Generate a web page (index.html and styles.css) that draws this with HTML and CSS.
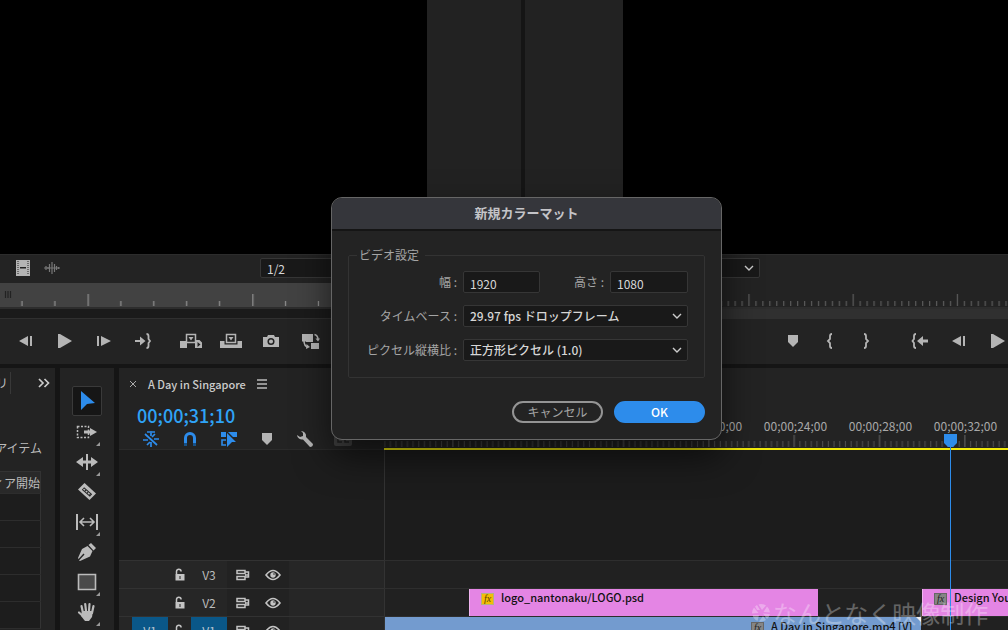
FILE: index.html
```html
<!DOCTYPE html>
<html lang="ja">
<head>
<meta charset="utf-8">
<title>新規カラーマット</title>
<link rel="stylesheet" href="styles.css">
</head>
<body>
<svg class="defs" aria-hidden="true">
  <symbol id="step-back" viewBox="0 0 16 14"><path d="M1 7 10 2v10zM12 2h2v10h-2z"/></symbol>
  <symbol id="play" viewBox="0 0 16 14"><path d="M1 0h2l12 7-12 7H1z"/></symbol>
  <symbol id="step-fwd" viewBox="0 0 16 14"><path d="M1 2h2v10H1zM5 2l10 5-10 5z"/></symbol>
  <symbol id="marker" viewBox="0 0 12 14"><path d="M1 1h10v7l-5 5-5-5z"/></symbol>
  <symbol id="lock" viewBox="0 0 12 14"><path d="M2.500 6V3.500a2.300 2.300 0 0 1 4.600 0" fill="none" stroke="currentColor" stroke-width="1.500"/><path d="M1.500 6h9v6.500h-9z"/><path d="M5.500 8h1v3h-1z" fill="#222"/></symbol>
  <symbol id="sync" viewBox="0 0 14 12"><path d="M1 1.500h8v3H1zM1 7.500h8v3H1zM9 3h3.500v5H9M9 6h3" fill="none" stroke="currentColor" stroke-width="1.500"/></symbol>
  <symbol id="eye" viewBox="0 0 16 12"><path d="M1 6q7-9 14 0-7 9-14 0z" fill="none" stroke="currentColor" stroke-width="1.600"/><circle cx="8" cy="6" r="2.700"/><circle cx="9" cy="5" r=".8" fill="#222"/></symbol>
  <symbol id="chev" viewBox="0 0 10 6"><path d="M1 1l4 4 4-4" fill="none" stroke="currentColor" stroke-width="1.400"/></symbol>
</svg>

<main class="workspace">
  <div class="monitors">
    <section class="monitor source">
      <div class="preview"><div class="pasteboard"></div></div>
      <div class="options">
        <button class="icon" aria-label="ビデオのみ"><svg width="16" height="16" viewBox="0 0 16 16"><path d="M1 0h14v16H1z"/><path d="M3 1v14M13 1v14" stroke="#222" stroke-width="1" stroke-dasharray="1 1"/><path d="M5 7h6v1.500H5z" fill="#222"/></svg></button>
        <button class="icon wave" aria-label="オーディオのみ"><svg width="18" height="14" viewBox="0 0 18 14"><path d="M1 7h16M3 5v4M5 6v2M6.500 3v8M9 1v12M11.500 3v8M13.500 5v4M15.500 6v2" fill="none" stroke="currentColor" stroke-width="1.200"/></svg></button>
        <select class="box scale" aria-label="再生時の解像度"><option>1/2</option></select>
      </div>
      <svg class="ruler bright" aria-hidden="true">
        <pattern id="t1" x="87.500" width="164.700" height="24" patternUnits="userSpaceOnUse"><path d="M.7 11v12M33.400 18v5M66.300 18v5M99.200 18v5M132.100 18v5" stroke="#929292" stroke-width="1.200"/></pattern>
        <path d="M5.500 8v7M8 8v7M10.500 8v7" stroke="#222" stroke-width="1.200"/>
        <rect width="100%" height="24" fill="url(#t1)"/>
      </svg>
      <div class="scroll"></div>
      <div class="transport">
        <button class="icon"><svg width="16" height="14"><use href="#step-back"/></svg></button>
        <button class="icon"><svg width="16" height="14"><use href="#play"/></svg></button>
        <button class="icon"><svg width="16" height="14"><use href="#step-fwd"/></svg></button>
        <button class="icon"><svg width="18" height="16" viewBox="0 0 18 16"><path d="M1 7h5V3.500L11.500 8 6 12.500V9H1z"/><path d="M12.500 1q2 0 2 2v3l1.500 2-1.500 2v3q0 2-2 2" fill="none" stroke="currentColor" stroke-width="1.800"/></svg></button>
        <div class="group">
          <button class="icon"><svg width="22" height="16" viewBox="0 0 22 16"><path d="M0 8h7v7H0zM15 7h4.500L22 9.500V15h-7z"/><path d="M6.500 1.500h9v8h-9z" fill="#222" stroke="currentColor" stroke-width="1.500"/><path d="M8.500 4h5L11 7.500z"/><path d="M17.500 9l3 2.500-3 2.500z" fill="#222"/></svg></button>
          <button class="icon"><svg width="22" height="16" viewBox="0 0 22 16"><path d="M0 8h22v7H0z"/><path d="M4.500 7h13v5h-13z" fill="#222"/><path d="M6.500 1.500h9v8h-9z" fill="#222" stroke="currentColor" stroke-width="1.500"/><path d="M8.500 4h5L11 7.500zM4 11.500h14V15H4z"/></svg></button>
          <button class="icon"><svg width="18" height="14" viewBox="0 0 18 14"><path d="M1 3h4l1-2h6l1 2h4v10H1z"/><circle cx="9" cy="7.500" r="2.800" fill="none" stroke="#222" stroke-width="1.500"/></svg></button>
          <button class="icon"><svg width="20" height="18" viewBox="0 0 20 18"><path d="M1 2h11v8H1zM10 11h8v6h-8z"/><path d="M3 9.500q0 5 4 6" fill="none" stroke="#222" stroke-width="4"/><path d="M3 8.500q0 6 4 6.500M13.500 2.500q3.500 1 3.500 5" fill="none" stroke="currentColor" stroke-width="1.500"/><path d="M5.500 12l3.500 3-4 2zM14.500 6.500H19l-2 3z"/></svg></button>
        </div>
      </div>
    </section>
    <section class="monitor program">
      <div class="preview"><div class="pasteboard"></div></div>
      <div class="options"><select class="box fit" aria-label="ズームレベル"><option></option></select><svg class="arrow" width="10" height="6"><use href="#chev"/></svg></div>
      <svg class="ruler" aria-hidden="true">
        <pattern id="t2" x="15" width="104.200" height="24" patternUnits="userSpaceOnUse"><path d="M.6 11v12" stroke="#666"/><path d="M7.550 18v5m6.950-5v5m6.950-5v5m6.950-5v5m6.950-5v5m6.950-5v5m6.950-5v5m6.950-5v5m6.950-5v5m6.950-5v5m6.950-5v5m6.950-5v5m6.950-5v5m6.950-5v5" stroke="#5a5a5a" stroke-width="1.200" fill="none"/></pattern>
        <rect width="100%" height="24" fill="url(#t2)"/>
      </svg>
      <div class="scroll"></div>
      <div class="transport">
        <button class="icon"><svg width="12" height="14"><use href="#marker"/></svg></button>
        <button class="icon brace"><svg width="8" height="16" viewBox="0 0 8 16"><path d="M6 1Q4 1 4 3v3L2 8l2 2v3q0 2 2 2" fill="none" stroke="currentColor" stroke-width="1.800"/></svg></button>
        <button class="icon brace"><svg width="8" height="16" viewBox="0 0 8 16"><path d="M2 1q2 0 2 2v3l2 2-2 2v3q0 2-2 2" fill="none" stroke="currentColor" stroke-width="1.800"/></svg></button>
        <div class="group">
          <button class="icon"><svg width="18" height="16" viewBox="0 0 18 16"><path d="M17 6.500h-5V3L6 8l6 5V9.500h5z"/><path d="M5 1Q3 1 3 3v3L1.500 8 3 10v3q0 2 2 2" fill="none" stroke="currentColor" stroke-width="1.800"/></svg></button>
          <button class="icon"><svg width="16" height="14"><use href="#step-back"/></svg></button>
          <button class="icon"><svg width="16" height="14"><use href="#play"/></svg></button>
        </div>
      </div>
    </section>
  </div>

  <div class="lower">
    <section class="project">
      <div class="tabs"><span class="tab-cut">リ</span><svg width="12" height="10" viewBox="0 0 12 10"><path d="M1 1l4 4-4 4M6.500 1l4 4-4 4" fill="none" stroke="#ccc" stroke-width="1.700"/></svg></div>
      <p class="count">アイテム</p>
      <table class="bin">
        <tr><th><span class="cut">ィア開始</span></th></tr>
        <tr><td></td></tr><tr><td></td></tr><tr><td></td></tr><tr><td></td></tr><tr><td></td></tr>
      </table>
    </section>

    <nav class="tools" aria-label="ツール">
      <button class="tool active"><svg width="18" height="20" viewBox="0 0 18 20"><path d="M3 0l14 12-8 1-6 6z"/></svg></button>
      <button class="tool more"><svg width="22" height="14" viewBox="0 0 22 14"><path d="M1.500 1.500h11v11h-11z" fill="none" stroke="currentColor" stroke-width="1.500" stroke-dasharray="2 1.500"/><path d="M8 5.500h6V3l7 4-7 4V8.500H8z"/></svg></button>
      <button class="tool more"><svg width="24" height="16" viewBox="0 0 24 16"><path d="M1 8l7-5v3.500h3V0h2v6.500h3V3l7 5-7 5V9.500h-3V16h-2V9.500H8V13z"/></svg></button>
      <button class="tool"><svg width="20" height="18" viewBox="0 0 20 18"><path d="M7.500 0L19 10.500 12.500 17 1 6.500z"/><path d="M6 5.500l8 7" stroke="#222" stroke-width="3.500"/><path d="M6.500 6l7 6" stroke="#bbb" stroke-width="1.500" stroke-dasharray="2 1"/></svg></button>
      <button class="tool more"><svg width="24" height="18" viewBox="0 0 24 18"><path d="M1 1h2v16H1zM21 1h2v16h-2z"/><path d="M5 9h14M9 5L5 9l4 4M15 5l4 4-4 4" fill="none" stroke="currentColor" stroke-width="1.600"/></svg></button>
      <button class="tool"><svg width="20" height="18" viewBox="0 0 20 18"><path d="M11.500 2L14 0l5 5-2.500 2.500zM10.500 3l5 5-2.500 5.500L3 18l-1-.500 5.500-6-1-1L1.500 16 1 15 5 6z"/></svg></button>
      <button class="tool more"><svg width="20" height="18" viewBox="0 0 20 18"><path d="M1.500 1.500h17v15h-17z" fill="#4a4a4a" stroke="currentColor" stroke-width="1.600"/></svg></button>
      <button class="tool more"><svg width="20" height="20" viewBox="0 0 20 20"><path d="M6 11L4.500 4M9 9L8.200 2M12 9l.5-7M15 11l1.500-7M7 15l-5-4.500" fill="none" stroke="currentColor" stroke-width="2.200" stroke-linecap="round"/><path d="M5 9h11l-1 6-3 4H8l-4-5z"/></svg></button>
    </nav>

    <section class="timeline">
      <header class="seq-head">
        <div class="seq-left">
          <div class="seq-tab">
            <svg width="8" height="8" viewBox="0 0 8 8"><path d="M1 1l6 6M7 1L1 7" stroke="#aaa"/></svg>
            <span>A Day in Singapore</span>
            <svg width="10" height="10" viewBox="0 0 10 10"><path d="M0 1h10M0 5h10M0 9h10" stroke="#bbb" stroke-width="1.300"/></svg>
          </div>
          <div class="timecode">00;00;31;10</div>
          <div class="seq-icons">
            <button class="icon on"><svg width="18" height="16" viewBox="0 0 18 16"><path d="M9 0v5M9 11v5M1 9h5M12 8h5M3 3l12 11M13 3l-3 3M5 14l3-3M5 1h3M10 1h3" fill="none" stroke="currentColor" stroke-width="1.700"/></svg></button>
            <button class="icon on"><svg width="14" height="14" viewBox="0 0 14 14"><path d="M2.500 11V6a4.500 4.500 0 0 1 9 0v5" fill="none" stroke="currentColor" stroke-width="3"/><path d="M1 11h3v3H1zM10 11h3v3h-3z" fill="#175188"/></svg></button>
            <button class="icon on"><svg width="18" height="16" viewBox="0 0 18 16"><path d="M1 1h5v5H1zM8 1h9v5h-4zM7 2l9 9h-4l-5 5z"/><path d="M6 9H2v5h4" fill="none" stroke="currentColor" stroke-width="1.600"/></svg></button>
            <button class="icon"><svg width="12" height="14"><use href="#marker"/></svg></button>
            <button class="icon"><svg width="18" height="18" viewBox="0 0 18 18"><path d="M5 1a5 5 0 0 1 5 6l7 7q0 3-3 3L7 9.500A5 5 0 0 1 1 5l3 2 3-1V3z"/></svg></button>
            <button class="icon cc"><svg width="18" height="14" viewBox="0 0 18 14"><rect width="18" height="14" rx="2" fill="#444"/><path d="M8 5H4v5h4M15 5h-4v5h4" fill="none" stroke="#222" stroke-width="1.500"/></svg></button>
          </div>
        </div>
        <div class="time-ruler">
          <div class="labels"><span>00;00;20;00</span><span>00;00;24;00</span><span>00;00;28;00</span><span>00;00;32;00</span></div>
          <svg class="ticks" aria-hidden="true">
            <pattern id="t3" x="68" width="85.330" height="14" patternUnits="userSpaceOnUse"><path d="M.9 1v12" stroke="#666"/><path d="M6.600 7v6m5.690-6v6m5.690-6v6m5.690-6v6m5.690-6v6m5.690-6v6m5.690-6v6m5.690-6v6m5.690-6v6m5.690-6v6m5.690-6v6m5.690-6v6m5.690-6v6m5.690-6v6" stroke="#505050" fill="none"/></pattern>
            <rect width="100%" height="14" fill="url(#t3)"/>
          </svg>
        </div>
      </header>
      <div class="tracks">
        <div class="spacer"></div><div class="lane top"></div>
        <div class="track-head"><span></span><svg width="12" height="14"><use href="#lock"/></svg><span class="name">V3</span><div class="toggles"><svg width="14" height="12"><use href="#sync"/></svg><svg width="16" height="12"><use href="#eye"/></svg></div></div>
        <div class="lane"></div>
        <div class="track-head"><span></span><svg width="12" height="14"><use href="#lock"/></svg><span class="name">V2</span><div class="toggles"><svg width="14" height="12"><use href="#sync"/></svg><svg width="16" height="12"><use href="#eye"/></svg></div></div>
        <div class="lane v2"><div class="clip pink"><i class="fx yellow">fx</i>logo_nantonaku/LOGO.psd</div><div class="clip pink last"><i class="fx">fx</i>Design You</div></div>
        <div class="track-head"><span class="patch">V1</span><svg width="12" height="14"><use href="#lock"/></svg><span class="name patch">V1</span><div class="toggles"><svg width="14" height="12"><use href="#sync"/></svg><svg width="16" height="12"><use href="#eye"/></svg></div></div>
        <div class="lane"><div class="clip blue"><i class="fx">fx</i>A Day in Singapore.mp4 [V]</div></div>
      </div>
      <div class="playhead"><svg width="13" height="14" viewBox="0 0 13 14"><path d="M0 0h13v9l-4 4H4L0 9z"/></svg></div>
    </section>
  </div>

  <div class="watermark"><svg width="20" height="20" viewBox="0 0 20 20"><path d="M10 1a9 9 0 0 1 5 1.500L11 7 7.500 1.500zM16 3.500a9 9 0 0 1 3 6L12.500 9zM19 11a9 9 0 0 1-3 5l-4-5.500zM15 17a9 9 0 0 1-7 1.500L12 13zM6.500 18a9 9 0 0 1-5-6L8 12zM1 10.500A9 9 0 0 1 3 4.500L7.500 10zM4 3.500l2-1.500L9 7H6z"/></svg>なんとなく映像制作</div>
</main>

<form class="dialog" role="dialog" aria-labelledby="dlg-title">
  <h1 id="dlg-title">新規カラーマット</h1>
  <div class="dialog-body">
    <fieldset>
      <legend>ビデオ設定</legend>
      <div class="fields">
        <label for="w">幅 :</label><input class="box" id="w" value="1920">
        <label for="h">高さ :</label><input class="box" id="h" value="1080">
        <label for="tb">タイムベース :</label>
        <div class="pick"><select class="box" id="tb"><option>29.97 fps ドロップフレーム</option></select><svg class="arrow" width="10" height="6"><use href="#chev"/></svg></div>
        <label for="par">ピクセル縦横比 :</label>
        <div class="pick"><select class="box" id="par"><option>正方形ピクセル (1.0)</option></select><svg class="arrow" width="10" height="6"><use href="#chev"/></svg></div>
      </div>
    </fieldset>
    <div class="actions"><button type="button" class="btn">キャンセル</button><button type="button" class="btn primary">OK</button></div>
  </div>
</form>
</body>
</html>
```
FILE: styles.css
```css
* { box-sizing: border-box; }
body {
  margin: 0;
  height: 100vh;
  overflow: hidden;
  background: #151515;
  color: #bbb;
  font: 12px/16px "Noto Sans CJK JP", "Noto Sans", sans-serif;
}
button, input, select { font: inherit; color: inherit; margin: 0; }
svg { display: block; fill: currentColor; flex: none; }
.defs { position: absolute; width: 0; height: 0; }

.workspace { position: relative; display: flex; flex-direction: column; gap: 4px; height: 100vh; overflow: hidden; }
.icon { display: flex; flex: none; align-items: center; justify-content: center; padding: 0; border: 0; background: none; color: #b4b4b4; }
.box { height: 22px; padding: 0 6px; border: 1px solid #363636; border-radius: 2px; background: #191919; color: #d6d6d6; appearance: none; outline: 0; }
.arrow { color: #ccc; pointer-events: none; }

/* monitors */
.monitors { display: grid; grid-template-columns: 521fr 483fr; gap: 4px; }
.monitor { display: flex; flex-direction: column; min-width: 0; overflow: hidden; background: #232323; }
.preview { display: flex; height: 254px; background: #000; }
.pasteboard { background: #222; }
.source .preview { justify-content: flex-end; }
.source .pasteboard { width: 94px; }
.program .pasteboard { width: 98px; }
.options { display: flex; align-items: center; height: 29px; padding-bottom: 2px; border-top: 1px solid #2c2c2c; }
.options .icon { margin-left: 15px; }
.options .wave { margin-left: 12px; color: #777; }
.options .box { height: 20px; }
.scale { width: 120px; margin-left: 199px; padding-top: 2px; }
.fit { width: 115px; margin-left: 120px; }
.options .arrow { margin-left: -16px; }
.ruler { width: 100%; height: 24px; }
.bright { background: #424242; }
.scroll { height: 12px; border-top: 2px solid #2d2d2d; border-bottom: 1px solid #303030; background: #1b1b1b; }
.program .scroll { background: #303030; }
.transport { display: flex; align-items: center; height: 45px; padding: 0 0 2px 6px; }
.transport .icon { width: 39px; height: 30px; }
.transport .group { display: flex; flex: none; margin-left: 9px; }
.source .group .icon { width: 40px; }
.program .transport { padding-left: 248px; }
.transport .brace { width: 36px; }
.program .group { margin-left: 16px; }

/* lower panels */
.lower { flex: 1; display: grid; grid-template-columns: 55px 54px 1fr; gap: 5px; min-height: 0; }
.project, .tools, .timeline { min-width: 0; overflow: hidden; background: #232323; }
.tabs { display: flex; align-items: center; justify-content: space-between; height: 22px; margin-top: 4px; padding-right: 5px; }
.tab-cut { display: flex; justify-content: flex-end; width: 11px; padding-right: 2px; line-height: 22px; border-right: 1px solid #383838; }
.count { display: flex; justify-content: flex-end; width: 42px; margin: 46px 0 15px; overflow: hidden; white-space: nowrap; }
.bin { width: 41px; border-collapse: collapse; table-layout: fixed; background: #1d1d1d; border-right: 1px solid #333; }
.bin th, .bin td { height: 27px; padding: 0; border-bottom: 1px solid #2d2d2d; font-weight: 400; }
.bin th { height: 22px; background: #292929; border-top: 1px solid #333; }
.cut { display: flex; justify-content: flex-end; overflow: hidden; white-space: nowrap; }

.tools { display: flex; flex-direction: column; align-items: center; gap: 2px; padding: 18px 1px 0 0; }
.tool { position: relative; display: flex; flex: none; align-items: center; justify-content: center; width: 30px; height: 28px; padding: 0; border: 0; background: none; color: #bbb; }
.tool.active { height: 30px; border: 1px solid #3a3a3a; border-radius: 2px; background: #161616; color: #2d8ceb; }
.more::after { content: ""; position: absolute; right: 2px; bottom: 0; border-left: 4px solid transparent; border-bottom: 4px solid #999; }

/* timeline */
.timeline { position: relative; display: flex; flex-direction: column; }
.seq-head { display: grid; grid-template-columns: 265px 1fr; height: 82px; }
.seq-left { padding: 8px 0 0 10px; border-bottom: 1px solid #2b2b2b; }
.seq-tab { display: flex; align-items: center; gap: 11px; height: 16px; color: #ccc; font-size: 11px; font-weight: 500; white-space: nowrap; }
.timecode { margin-top: 13px; padding-left: 8px; color: #2fa3f7; font-size: 18px; font-weight: 500; line-height: 20px; }
.seq-icons { display: flex; margin-top: 6px; padding-left: 2px; }
.seq-icons .icon { width: 38px; height: 16px; }
.seq-icons .on { color: #2d8ceb; width: 39px; }
.time-ruler { display: flex; flex-direction: column; justify-content: flex-end; min-width: 0; overflow: hidden; border-bottom: 2px solid #f1e90c; }
.labels { display: flex; padding-left: 284px; color: #a8a8a8; }
.labels span { flex: none; width: 85px; text-align: center; }
.ticks { width: 100%; height: 14px; }
.tracks { flex: 1; display: grid; grid-template-columns: 265px 1fr; grid-template-rows: 110px 28px 28px 28px; min-height: 0; overflow: hidden; background: #1d1d1d; }
.lane { display: flex; min-width: 0; overflow: hidden; border-left: 1px solid #333; border-top: 1px solid #2e2e2e; background: #212121; }
.lane.top { border-top: 0; background: #1c1c1c; }
.track-head { display: grid; grid-template-columns: 36px 23px 36px 62px; align-items: center; justify-items: center; padding-left: 13px; border-top: 1px solid #323232; background: #262626; }
.track-head > svg, .toggles svg { color: #c4c4c4; }
.toggles { display: flex; align-items: center; align-self: stretch; gap: 15px; width: 62px; padding-left: 9px; background: #222; }
.patch { display: flex; align-items: center; justify-content: center; width: 36px; height: 27px; background: #0a5788; color: #b5c5d0; }
.clip { flex: none; display: flex; align-items: flex-start; gap: 7px; height: 27px; padding: 0 11px; color: #111; white-space: nowrap; overflow: hidden; font-size: 11px; font-weight: 500; }
.pink { width: 349px; background: #e485e4; border-left: 1px solid #f0b4f0; }
.v2 { padding-left: 84px; }
.v2 .last { flex: 1; margin-left: 104px; padding-right: 0; }
.blue { position: relative; width: 536px; padding: 1px 0 0 366px; background: #739bcf; }
.blue::after { content: ""; position: absolute; top: 0; right: 0; border-left: 5px solid transparent; border-top: 5px solid #eee; }
.fx { flex: none; width: 13px; height: 12px; margin-top: 4px; border: 1px solid #666; background: #858585; color: #222; font: italic 10px/10px "Liberation Serif", serif; text-align: center; }
.yellow { background: #f5bd05; border-color: #b5b57a; color: #5b4500; }
.playhead { position: absolute; top: 66px; bottom: 0; left: 825px; width: 13px; color: #2d8ceb; }
.playhead::after { content: ""; position: absolute; top: 12px; bottom: 0; left: 6px; width: 1px; background: #2d8ceb; }

.watermark { position: absolute; left: 751px; bottom: 1px; display: flex; align-items: center; gap: 2px; color: #fff; font-size: 24px; line-height: 32px; opacity: .3; white-space: nowrap; }

/* dialog */
.dialog { position: absolute; top: 197px; left: 331px; width: 391px; overflow: hidden; border: 1px solid #666; border-radius: 11px; background: #232323; box-shadow: 0 16px 36px rgba(0, 0, 0, .6); }
.dialog h1 { margin: 0; height: 33px; border-bottom: 2px solid #151515; background: #35363b; color: #c4c4c8; font-size: 13px; font-weight: 700; line-height: 30px; text-align: center; }
.dialog-body { padding: 16px; }
fieldset { min-width: 0; margin: 0; padding: 0 16px 16px 8px; border: 1px solid #333; border-radius: 2px; }
legend { padding: 0 6px 0 2px; line-height: 16px; }
fieldset, label, legend { color: #a5a5a5; }
.fields { display: grid; grid-template-columns: 106px 77px 1fr 78px; row-gap: 12px; margin-top: 8px; align-items: center; }
.fields label { padding-right: 6px; text-align: right; white-space: nowrap; }
.fields input { width: 100%; padding-top: 3px; }
.pick { grid-column: 2 / -1; display: flex; align-items: center; }
.pick select { flex: 1; width: 100%; padding: 0 6px; font-weight: 500; }
.pick .arrow { margin-left: -16px; margin-right: 6px; }
.actions { display: flex; justify-content: flex-end; gap: 11px; margin-top: 23px; }
.btn { width: 91px; height: 22px; padding: 0; border: 2px solid #949494; border-radius: 11px; background: none; color: #a5a5a5; line-height: 16px; }
.primary { border-color: #2d8ceb; background: #2d8ceb; color: #fff; font-weight: 500; }
```
